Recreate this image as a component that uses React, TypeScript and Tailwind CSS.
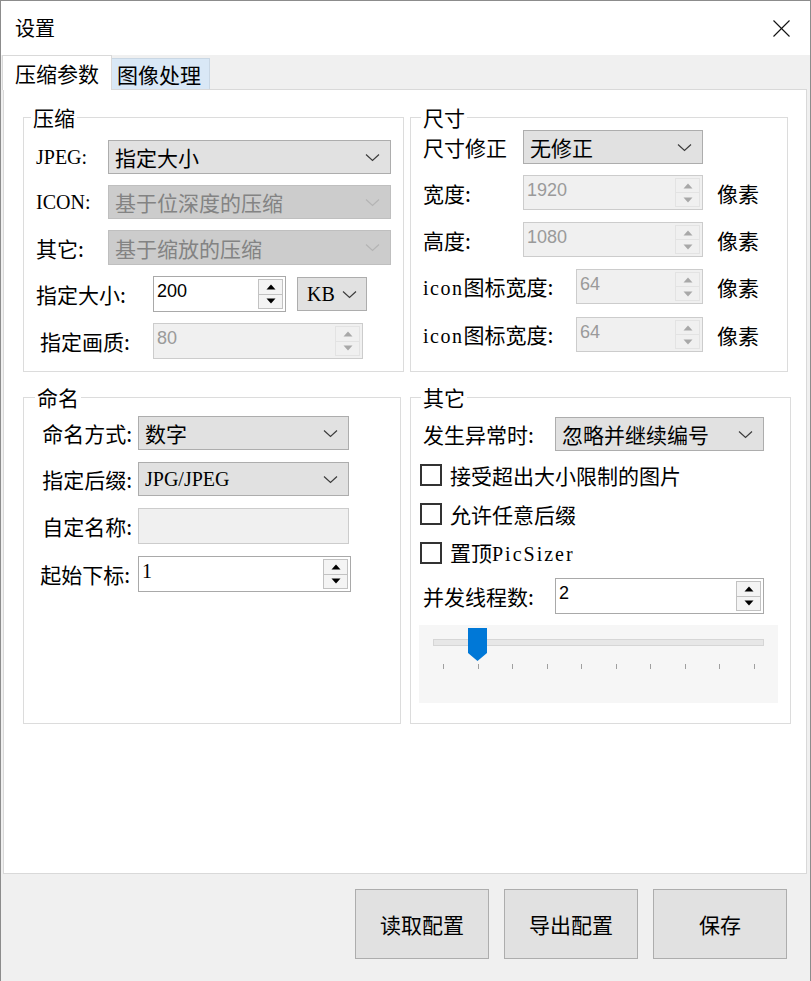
import React from 'react';

function Chevron({ color = '#3c3c3c' }: { color?: string }) {
  return (
    <svg width="15" height="9" viewBox="0 0 15 9" className="shrink-0">
      <polyline points="1,1.5 7.5,7.5 14,1.5" fill="none" stroke={color} strokeWidth="1.2" />
    </svg>
  );
}

function Tri({ up, color }: { up?: boolean; color: string }) {
  return (
    <svg width="10" height="6" viewBox="0 0 10 6">
      {up ? <polygon points="0.5,5.5 9.5,5.5 5,0.5" fill={color} /> : <polygon points="0.5,0.5 9.5,0.5 5,5.5" fill={color} />}
    </svg>
  );
}

function Select({
  children,
  disabled,
  className = '',
}: {
  children: React.ReactNode;
  disabled?: boolean;
  className?: string;
}) {
  return (
    <div
      className={`flex items-center justify-between border pl-[6px] pr-[10px] ${
        disabled ? 'border-[#bfbfbf] bg-[#cccccc] text-[#838383]' : 'border-[#adadad] bg-[#e1e1e1] text-black'
      } ${className}`}
    >
      <span className="text-[21px] leading-[26px] whitespace-nowrap">{children}</span>
      <Chevron color={disabled ? '#b4b4b4' : '#3c3c3c'} />
    </div>
  );
}

function Spin({
  value,
  disabled,
  className = '',
  valueClass = "font-['Liberation_Sans',sans-serif] text-[18px]",
}: {
  value: string;
  disabled?: boolean;
  className?: string;
  valueClass?: string;
}) {
  return (
    <div
      className={`flex border ${disabled ? 'border-[#cccccc] bg-[#f0f0f0]' : 'border-[#a9a9a9] bg-white'} ${className}`}
    >
      <div
        className={`flex-1 pl-[3px] pt-[3px] leading-[22px] ${
          disabled ? 'text-[#9a9a9a]' : 'text-black'
        } ${valueClass}`}
      >
        {value}
      </div>
      <div
        className={`my-[2px] mr-[2px] w-[25px] flex flex-col border ${
          disabled ? 'border-[#e3e3e3] bg-[#f0f0f0]' : 'border-[#c2c2c2] bg-[#f4f4f4]'
        }`}
      >
        <div
          className={`flex-1 flex items-center justify-center border-b ${
            disabled ? 'border-[#e3e3e3]' : 'border-[#c2c2c2]'
          }`}
        >
          <Tri up color={disabled ? '#a8a8a8' : '#000000'} />
        </div>
        <div className="flex-1 flex items-center justify-center">
          <Tri color={disabled ? '#a8a8a8' : '#000000'} />
        </div>
      </div>
    </div>
  );
}

function Check({ children }: { children: React.ReactNode }) {
  return (
    <div className="flex items-center h-[26px] -ml-[3px]">
      <div className="w-[22px] h-[22px] border-2 border-[#333333] bg-white shrink-0" />
      <span className="ml-[8px] text-[21px] leading-[26px] whitespace-nowrap">{children}</span>
    </div>
  );
}

const serif = "font-['Liberation_Serif',serif] text-[20px]";
const lab = 'text-[21px] leading-[26px] whitespace-nowrap';

export default function App() {
  const ticks = [0, 1, 2, 3, 4, 5, 6, 7, 8, 9];
  return (
    <div className="w-[811px] h-[981px] bg-[#f0f0f0] border-l border-t border-r border-[#8c8c8c] flex flex-col font-['Noto_Sans_CJK_SC',sans-serif] text-black overflow-hidden">
      {/* title bar */}
      <div className="h-[54px] bg-white flex items-center justify-between pl-[14px] pr-[20px] shrink-0">
        <span className="text-[20px] leading-[26px]">设置</span>
        <svg width="17" height="17" viewBox="0 0 17 17">
          <line x1="0.5" y1="0.5" x2="16.5" y2="16.5" stroke="#111" strokeWidth="1.1" />
          <line x1="16.5" y1="0.5" x2="0.5" y2="16.5" stroke="#111" strokeWidth="1.1" />
        </svg>
      </div>

      {/* tabs */}
      <div className="h-[34px] flex items-end pl-[1px] shrink-0">
        <div className="relative z-10 h-[35px] -mb-[1px] w-[110px] bg-white border-l border-t border-r border-[#d9d9d9] pl-[12px] flex items-center">
          <span className="text-[21px] leading-[26px] whitespace-nowrap">压缩参数</span>
        </div>
        <div className="h-[31px] w-[98px] bg-[#d9e8f6] border-t border-r border-[#c9d7e4] pl-[5px] flex items-center">
          <span className="text-[21px] leading-[26px] whitespace-nowrap">图像处理</span>
        </div>
      </div>

      {/* panel */}
      <div className="ml-[2px] mr-[3px] h-[785px] bg-white border border-[#d9d9d9] pl-[19px] pt-[14px] shrink-0">
        <div className="grid grid-cols-[378px_378px] gap-x-[9px] gap-y-[12px]">
          {/* 压缩 */}
          <fieldset className="h-[268px] border border-[#dcdcdc]">
            <legend className="ml-[7px] px-[2px] text-[21px] leading-[26px]">压缩</legend>
            <div className="flex flex-col px-[12px]">
              <div className="mt-[10px] h-[34px] flex items-center">
                <span className={`w-[72px] ${serif}`}>JPEG:</span>
                <Select className="w-[283px] h-full">指定大小</Select>
              </div>
              <div className="mt-[11px] h-[34px] flex items-center">
                <span className={`w-[72px] ${serif}`}>ICON:</span>
                <Select disabled className="w-[283px] h-full">基于位深度的压缩</Select>
              </div>
              <div className="mt-[11px] h-[35px] flex items-center">
                <span className={`w-[72px] ${lab}`}>其它:</span>
                <Select disabled className="w-[283px] h-full">基于缩放的压缩</Select>
              </div>
              <div className="mt-[11px] h-[36px] flex items-center">
                <span className={`w-[117px] ${lab}`}>指定大小:</span>
                <Spin value="200" className="w-[133px] h-full" />
                <div className="ml-[11px] w-[70px] h-[34px] flex items-center justify-between border border-[#adadad] bg-[#e1e1e1] pl-[9px] pr-[9px]">
                  <span className={`${serif} leading-[24px]`}>KB</span>
                  <Chevron />
                </div>
              </div>
              <div className="mt-[11px] h-[36px] flex items-center">
                <span className={`w-[117px] pl-[4px] ${lab}`}>指定画质:</span>
                <Spin value="80" disabled className="w-[210px] h-full" />
              </div>
            </div>
          </fieldset>

          {/* 尺寸 */}
          <fieldset className="h-[268px] border border-[#dcdcdc]">
            <legend className="ml-[10px] px-[2px] text-[21px] leading-[26px]">尺寸</legend>
            <div className="flex flex-col px-[12px]">
              <div className="h-[34px] flex items-center">
                <span className={`w-[100px] ${lab}`}>尺寸修正</span>
                <Select className="w-[180px] h-full">无修正</Select>
              </div>
              <div className="mt-[11px] h-[35px] flex items-center">
                <span className={`w-[100px] ${lab}`}>宽度:</span>
                <Spin value="1920" disabled className="w-[180px] h-full" />
                <span className={`ml-[14px] ${lab}`}>像素</span>
              </div>
              <div className="mt-[12px] h-[35px] flex items-center">
                <span className={`w-[100px] ${lab}`}>高度:</span>
                <Spin value="1080" disabled className="w-[180px] h-full" />
                <span className={`ml-[14px] ${lab}`}>像素</span>
              </div>
              <div className="mt-[12px] h-[35px] flex items-center">
                <span className={`w-[153px] ${lab}`}>
                  <span className={`${serif} tracking-[1.5px]`}>icon</span>图标宽度:
                </span>
                <Spin value="64" disabled className="w-[127px] h-full" />
                <span className={`ml-[14px] ${lab}`}>像素</span>
              </div>
              <div className="mt-[13px] h-[35px] flex items-center">
                <span className={`w-[153px] ${lab}`}>
                  <span className={`${serif} tracking-[1.5px]`}>icon</span>图标宽度:
                </span>
                <Spin value="64" disabled className="w-[127px] h-full" />
                <span className={`ml-[14px] ${lab}`}>像素</span>
              </div>
            </div>
          </fieldset>

          {/* 命名 */}
          <fieldset className="h-[340px] border border-[#dcdcdc]">
            <legend className="ml-[11px] px-[2px] text-[21px] leading-[26px]">命名</legend>
            <div className="flex flex-col">
              <div className="mt-[6px] h-[34px] flex items-center">
                <span className={`w-[114px] pr-[6px] text-right ${lab}`}>命名方式:</span>
                <Select className="w-[211px] h-full">数字</Select>
              </div>
              <div className="mt-[12px] h-[34px] flex items-center">
                <span className={`w-[114px] pr-[6px] text-right ${lab}`}>指定后缀:</span>
                <div className="w-[211px] h-full flex items-center justify-between border border-[#adadad] bg-[#e1e1e1] pl-[6px] pr-[10px]">
                  <span className={`${serif} leading-[24px]`}>JPG/JPEG</span>
                  <Chevron />
                </div>
              </div>
              <div className="mt-[12px] h-[36px] flex items-center">
                <span className={`w-[114px] pr-[6px] text-right ${lab}`}>自定名称:</span>
                <div className="w-[211px] h-full border border-[#cccccc] bg-[#f0f0f0]" />
              </div>
              <div className="mt-[12px] h-[36px] flex items-center">
                <span className={`w-[114px] pr-[8px] text-right ${lab}`}>起始下标:</span>
                <Spin value="1" className="w-[213px] h-full" valueClass="font-['Liberation_Serif',serif] text-[20px]" />
              </div>
            </div>
          </fieldset>

          {/* 其它 */}
          <fieldset className="h-[340px] border border-[#dcdcdc]">
            <legend className="ml-[10px] px-[2px] text-[21px] leading-[26px]">其它</legend>
            <div className="flex flex-col px-[12px]">
              <div className="mt-[7px] h-[34px] flex items-center">
                <span className={`w-[132px] ${lab}`}>发生异常时:</span>
                <Select className="w-[209px] h-full">忽略并继续编号</Select>
              </div>
              <div className="mt-[11px]">
                <Check>接受超出大小限制的图片</Check>
              </div>
              <div className="mt-[13px]">
                <Check>允许任意后缀</Check>
              </div>
              <div className="mt-[13px]">
                <Check>
                  置顶<span className={`${serif} tracking-[2px]`}>PicSizer</span>
                </Check>
              </div>
              <div className="mt-[12px] h-[36px] flex items-center">
                <span className={`w-[132px] ${lab}`}>并发线程数:</span>
                <Spin value="2" className="w-[209px] h-full" />
              </div>
              <div className="relative mt-[11px] -ml-[4px] w-[359px] h-[78px] bg-[#f6f6f6] pt-[14px]">
                <div className="ml-[14px] w-[331px] h-[7px] bg-[#e7e7e7] border border-[#d6d6d6]" />
                <div className="mt-[18px] pl-[24px] pr-[23px] flex justify-between">
                  {ticks.map((t) => (
                    <div key={t} className="w-[1px] h-[5px] bg-[#a0a0a0]" />
                  ))}
                </div>
                <svg className="absolute left-[49px] top-[3px]" width="19" height="34" viewBox="0 0 19 34">
                  <polygon points="0,0 19,0 19,25 9.5,33 0,25" fill="#0078d7" />
                </svg>
              </div>
            </div>
          </fieldset>
        </div>
      </div>

      {/* buttons */}
      <div className="flex justify-end gap-[15px] pr-[23px] pt-[15px]">
        {['读取配置', '导出配置', '保存'].map((b) => (
          <div
            key={b}
            className="w-[134px] h-[70px] bg-[#e1e1e1] border border-[#adadad] flex items-center justify-center text-[21px] leading-[26px]"
          >
            {b}
          </div>
        ))}
      </div>
    </div>
  );
}
